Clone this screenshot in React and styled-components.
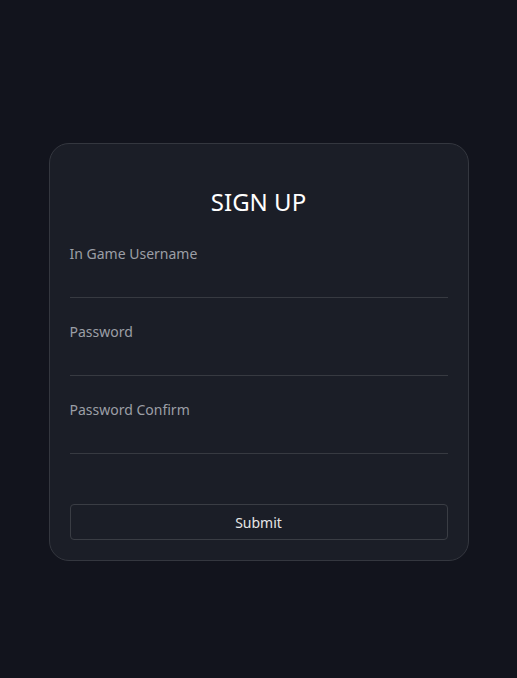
import styled, { createGlobalStyle } from "styled-components";

const GlobalStyle = createGlobalStyle`
  html, body {
    margin: 0;
    padding: 0;
    background: #12141d;
    font-family: "Noto Sans", "Open Sans", sans-serif;
  }
`;

const fields = [
  { label: "In Game Username", type: "text" },
  { label: "Password", type: "password" },
  { label: "Password Confirm", type: "password" },
];

const App = () => {
  return (
    <Page>
      <GlobalStyle />
      <Card onSubmit={(e) => e.preventDefault()}>
        <Title>SIGN UP</Title>
        {fields.map((f) => (
          <Field key={f.label}>
            <Label>{f.label}</Label>
            <Input type={f.type} />
          </Field>
        ))}
        <SubmitButton type="submit">Submit</SubmitButton>
      </Card>
    </Page>
  );
};

const Page = styled.main`
  display: flex;
  justify-content: center;
  min-height: 678px;
  padding-top: 143px;
  box-sizing: border-box;
`;

const Card = styled.form`
  width: 420px;
  height: 418px;
  box-sizing: border-box;
  padding: 41px 20px 20px;
  display: flex;
  flex-direction: column;
  background: #1b1e27;
  border: 1px solid #34373f;
  border-radius: 20px;
`;

const Title = styled.h1`
  margin: 0 0 26px;
  font-size: 24px;
  line-height: 33px;
  font-weight: 400;
  text-align: center;
  color: #ffffff;
`;

const Field = styled.label`
  display: flex;
  flex-direction: column;
  margin-bottom: 24px;
`;

const Label = styled.span`
  font-size: 14px;
  line-height: 20px;
  color: #9c9fa6;
`;

const Input = styled.input`
  height: 33px;
  padding: 0;
  border: none;
  border-bottom: 1px solid #373a41;
  background: transparent;
  color: #ffffff;
  font: inherit;
  outline: none;
`;

const SubmitButton = styled.button`
  margin-top: auto;
  height: 36px;
  border: 1px solid #3a3d44;
  border-radius: 4px;
  background: transparent;
  color: #e6e6e6;
  font-family: inherit;
  font-size: 14px;
  font-weight: 400;
  cursor: pointer;
`;

export default App;
